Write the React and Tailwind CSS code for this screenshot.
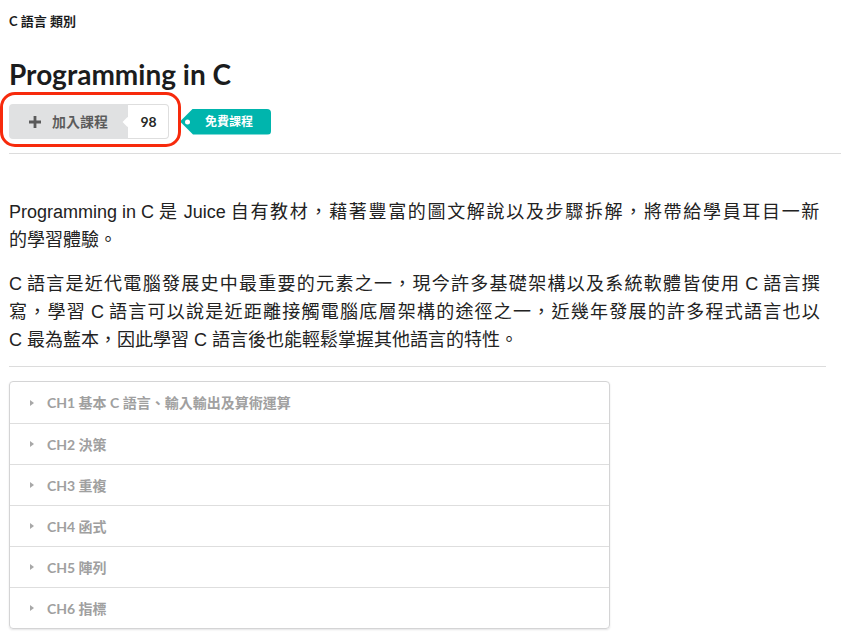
import React, { useLayoutEffect, useRef, useState } from "react";

const lato = "font-['Lato','Noto_Sans_CJK_TC',sans-serif]";
const body = "font-['Liberation_Sans','Noto_Sans_CJK_TC',sans-serif]";

const chapters = [
  "CH1 基本 C 語言、輸入輸出及算術運算",
  "CH2 決策",
  "CH3 重複",
  "CH4 函式",
  "CH5 陣列",
  "CH6 指標",
];

// reference lines wrap at these points; full lines run to the column edge
const intro = [
  ["Programming in C 是 Juice 自有教材，藉著豐富的圖文解說以及步驟拆解，將帶給學員耳目一新", "的學習體驗。"],
  [
    "C 語言是近代電腦發展史中最重要的元素之一，現今許多基礎架構以及系統軟體皆使用 C 語言撰",
    "寫，學習 C 語言可以說是近距離接觸電腦底層架構的途徑之一，近幾年發展的許多程式語言也以",
    "C 最為藍本，因此學習 C 語言後也能輕鬆掌握其他語言的特性。",
  ],
];

const COLUMN = 812;

// spreads a full line across the column, adding space only between CJK characters
function FullLine({ text }) {
  const ref = useRef(null);
  const [spacing, setSpacing] = useState(0);
  const parts = text.split(/([A-Za-z ]+)/).filter(Boolean);
  const cjkCount = parts
    .filter((part) => !/^[A-Za-z ]+$/.test(part))
    .reduce((sum, part) => sum + [...part].length, 0);

  useLayoutEffect(() => {
    const width = ref.current.getBoundingClientRect().width;
    setSpacing(Math.max(0, (COLUMN - width) / cjkCount));
  }, [text, cjkCount]);

  return (
    <span className="block">
      <span ref={ref} className="whitespace-pre">
        {parts.map((part, i) =>
          /^[A-Za-z ]+$/.test(part) ? (
            <span key={i}>{part}</span>
          ) : (
            <span key={i} style={{ letterSpacing: spacing }}>
              {part}
            </span>
          )
        )}
      </span>
    </span>
  );
}

function PlusIcon() {
  return (
    <svg width="12" height="12" viewBox="0 0 12 12" className="shrink-0">
      <path d="M4.6 0h2.8v4.6H12v2.8H7.4V12H4.6V7.4H0V4.6h4.6z" fill="rgba(0,0,0,0.6)" />
    </svg>
  );
}

function JoinButton() {
  return (
    <div className="relative flex h-[35px] items-stretch">
      <button
        type="button"
        className="flex w-[119px] items-center gap-[11px] rounded-l-[4px] bg-[#e0e1e2] pl-[20px] text-[14px] font-bold text-[rgba(0,0,0,0.6)]"
      >
        <PlusIcon />
        <span>加入課程</span>
      </button>
      <div className="relative flex w-[41px] items-center justify-center rounded-r-[4px] border border-l-0 border-[#dedede] bg-white pl-[1px] text-[14px] font-bold text-[rgba(0,0,0,0.87)]">
        <span className="absolute left-[-4px] top-1/2 h-[7px] w-[7px] -translate-y-1/2 rotate-45 bg-white" />
        98
      </div>
    </div>
  );
}

function FreeTag() {
  return (
    <div className="relative ml-[11px] flex h-[26px] w-[91px] items-center rounded-r-[4px] bg-[#00b5ad] pl-[25px] text-[12px] font-bold text-white [clip-path:polygon(13px_0,100%_0,100%_100%,13px_100%,0_50%)]">
      <span className="absolute left-[5px] top-1/2 h-[5px] w-[5px] -translate-y-1/2 rounded-full bg-white" />
      免費課程
    </div>
  );
}

export default function App() {
  return (
    <div className={`min-h-screen bg-white pt-[13px] text-[rgba(0,0,0,0.87)] ${lato}`}>
      <div className="pl-[9px]">
        <p className="text-[13px] font-bold leading-[16px] text-[#1b1c1d]">C 語言 類別</p>
        <h1 className="mt-[28px] text-[28px] font-bold leading-[34px] text-[#1b1c1d]">Programming in C</h1>

        <div className="relative mt-[13px] flex items-center">
          <JoinButton />
          <FreeTag />
          <span className="pointer-events-none absolute left-[-9px] top-[-12px] h-[55px] w-[181px] rounded-[15px] border-[3px] border-[#f72a0c]" />
        </div>

        <div className="mt-[14px] h-px bg-[#dcdcdc]" />
      </div>

      <div className="pl-[9px] pr-[15px]">
        <div className={`mt-[44px] w-[812px] text-[18px] leading-[28px] text-[#222] ${body}`}>
          {intro.map((lines, p) => (
            <p key={p} className={p > 0 ? "mt-[16px]" : ""}>
              {lines.map((line, i) =>
                i < lines.length - 1 ? (
                  <FullLine key={i} text={line} />
                ) : (
                  <span key={i} className="block whitespace-nowrap">
                    {line}
                  </span>
                )
              )}
            </p>
          ))}
        </div>

        <div className="mt-[12px] h-px bg-[#dcdcdc]" />

        <div className="mt-[14px] w-[601px] overflow-hidden rounded-[4px] border border-[#d4d4d5] shadow-[0_1px_2px_rgba(34,36,38,0.12)]">
          {chapters.map((title, i) => (
            <div
              key={title}
              className={`flex h-[41px] items-center pl-[20px] ${i > 0 ? "border-t border-[#dedede]" : ""}`}
            >
              <span className="h-0 w-0 border-y-[3.5px] border-l-[4px] border-y-transparent border-l-[#a8a8a8]" />
              <span className="ml-[13px] text-[14px] font-bold text-[#a0a0a0]">{title}</span>
            </div>
          ))}
        </div>
      </div>
    </div>
  );
}
